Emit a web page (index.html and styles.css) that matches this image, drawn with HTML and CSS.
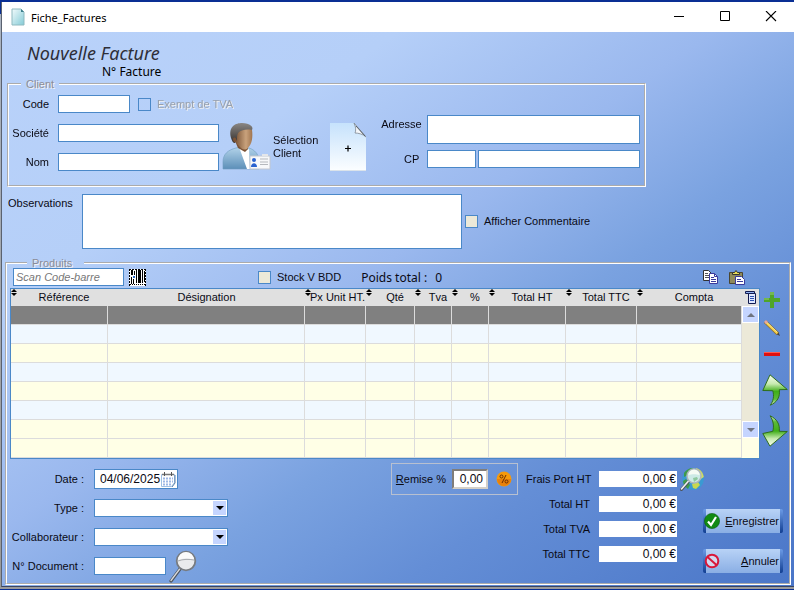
FILE: index.html
```
<!DOCTYPE html>
<html lang="fr">
<head>
  <meta charset="UTF-8">
  <meta name="viewport" content="width=device-width, initial-scale=1.0">
  <title>Fiche_Factures</title>
  <link rel="stylesheet" href="styles.css">
</head>
<body>
  <div class="window">
    <header class="titlebar">
      <svg class="app-icon" width="14" height="18" viewBox="0 0 14 18">
        <defs>
          <linearGradient id="page" x1="0" y1="0" x2="1" y2="1">
            <stop offset="0" stop-color="#f2fbfc"/>
            <stop offset="1" stop-color="#84cbd6"/>
          </linearGradient>
        </defs>
        <path d="M1 1h9l3 3v13H1z" fill="url(#page)" stroke="#8fbac0" stroke-width="1"/>
        <path d="M10 1v3h3z" fill="#3f7f8c"/>
      </svg>
      <span class="window-title">Fiche_Factures</span>
      <button type="button" class="win-btn" aria-label="Réduire">
        <svg width="12" height="12" viewBox="0 0 12 12"><path d="M1 5.500h10" stroke="#000"/></svg>
      </button>
      <button type="button" class="win-btn" aria-label="Agrandir">
        <svg width="12" height="12" viewBox="0 0 12 12"><path d="M1.500 .5h9v9h-9z" fill="none" stroke="#000"/></svg>
      </button>
      <button type="button" class="win-btn" aria-label="Fermer">
        <svg width="12" height="12" viewBox="0 0 12 12"><path d="M1 0l10 10M11 0L1 10" stroke="#000" stroke-width="1.100"/></svg>
      </button>
    </header>

    <main class="content">
      <div class="heading">
        <h1>Nouvelle Facture</h1>
        <p>N° Facture</p>
      </div>

      <fieldset class="group client">
        <legend>Client</legend>
        <div class="client-body">
          <div class="client-fields">
            <label for="code">Code</label>
            <div class="code-row">
              <input type="text" id="code" class="field code" autofocus>
              <input type="checkbox" id="exempt" class="check clear" disabled>
              <label for="exempt" class="disabled">Exempt de TVA</label>
            </div>
            <label for="societe">Société</label>
            <input type="text" id="societe" class="field">
            <label for="nom">Nom</label>
            <input type="text" id="nom" class="field">
          </div>

          <button type="button" class="icon-btn select-client">
            <svg width="50" height="49" viewBox="0 0 50 49">
              <defs>
                <linearGradient id="suit" x1="0" y1="0" x2="0" y2="1">
                  <stop offset="0" stop-color="#b4d4ea"/>
                  <stop offset="1" stop-color="#5c8fb8"/>
                </linearGradient>
                <linearGradient id="face" x1="0" y1="0" x2="1" y2="0">
                  <stop offset="0" stop-color="#6e492e"/>
                  <stop offset=".65" stop-color="#c9a27c"/>
                  <stop offset="1" stop-color="#a0754f"/>
                </linearGradient>
                <linearGradient id="hair" x1="0" y1="0" x2="0" y2="1">
                  <stop offset="0" stop-color="#8a8784"/>
                  <stop offset="1" stop-color="#35302d"/>
                </linearGradient>
              </defs>
              <path d="M1 47V40c0-8 5-12 13-14l5-1 8 1c6 2 9 6 10 11v10z" fill="url(#suit)" stroke="#6f9cbf" stroke-width=".6"/>
              <path d="M17 25l6 4 4-2 1 20h-3z" fill="#fff"/>
              <path d="M13 19h13v8l-3 3-7-4z" fill="#7b5235"/>
              <path d="M12 8c4-4 14-4 18 0 1 7 0 14-4 18-3 3-7 1-9-2-4-4-5-10-5-16z" fill="url(#face)"/>
              <path d="M9 16C6 4 14 1 20 1c8 0 12 4 10 7-6-1-10 0-13 2-2 2-2 4-2 7l-2 4c-2 0-3-2-4-5z" fill="url(#hair)"/>
              <path d="M11 17c0-2 3-2 3 0v3c-2 1-3-1-3-3z" fill="#7b5235"/>
              <path d="M28 34h20v13H28z" fill="#f7f8fa" stroke="#c2c7d0"/>
              <path d="M40 32h6v2h-6z" fill="#e4e6ea"/>
              <circle cx="32" cy="38" r="2" fill="#2a62cf"/>
              <path d="M29 45c0-5 6-5 6 0z" fill="#2a62cf"/>
              <path d="M38 37h8M38 40h8M38 42.500h8" stroke="#b5b8bd"/>
            </svg>
            <span>Sélection<br>Client</span>
          </button>

          <button type="button" class="icon-btn new-client" aria-label="Nouveau client">
            <svg width="36" height="48" viewBox="0 0 36 48">
              <defs>
                <linearGradient id="sheet" x1="0" y1="0" x2="0" y2="1">
                  <stop offset="0" stop-color="#c6e2fc"/>
                  <stop offset="1" stop-color="#fcfeff"/>
                </linearGradient>
              </defs>
              <path d="M0 0h24l12 14v34H0z" fill="url(#sheet)"/>
              <path d="M24 0c2 4 2 8 1 10 3 0 8 1 11 4z" fill="#f3f6f9" stroke="#7d8790" stroke-width=".8"/>
              <path d="M26 3l9 10" stroke="#555f68" stroke-width="1"/>
              <path d="M0 47.500h36" stroke="#dbe3ea"/>
              <path d="M15 25.500h6M18 22.500v6" stroke="#000" stroke-width="1.200"/>
            </svg>
          </button>

          <div class="address">
            <label for="adresse">Adresse</label>
            <textarea id="adresse" class="field"></textarea>
            <label for="cp" class="cp-label">CP</label>
            <div class="city">
              <input type="text" id="cp" class="field">
              <input type="text" class="field" aria-label="Ville">
            </div>
          </div>
        </div>
      </fieldset>

      <div class="notes">
        <label for="observations">Observations</label>
        <textarea id="observations" class="field"></textarea>
        <span class="option">
          <input type="checkbox" id="commentaire" class="check">
          <label for="commentaire">Afficher Commentaire</label>
        </span>
      </div>

      <fieldset class="group products">
        <legend>Produits</legend>

        <div class="toolbar">
          <input type="text" class="field scan" placeholder="Scan Code-barre" aria-label="Scan Code-barre">
          <svg class="barcode" width="17" height="17" viewBox="0 0 17 17">
            <path fill="#fff" d="M0 0h17v17H0z"/>
            <path stroke="#000" stroke-dasharray="2 1" d="M.5 0v17M16.500 0v17M0 .5h17"/>
            <path fill="#000" d="M2 1h2v5H2zM2 8h1v7H2zM4 10h1v5H4zM5 2h1v4H5zM7 1h1v13H7zM9 1h3v13H9zM13 1h1v13h-1zM15 2h1v11h-1z"/>
            <path fill="#2a6ac8" d="M4 7h2v2H4z"/>
            <path stroke="#000" stroke-dasharray="1 1" d="M1 15.500h15"/>
          </svg>
          <span class="option stock">
            <input type="checkbox" id="stock" class="check">
            <label for="stock">Stock V BDD</label>
          </span>
          <span class="weight">Poids total : <b>0</b></span>
          <button type="button" class="icon-btn copy" aria-label="Copier">
            <svg width="16" height="15" viewBox="0 0 16 15">
              <path d="M.5.5h5l3 3v7h-8z" fill="#fff" stroke="#333"/>
              <path d="M2 3.500h3M2 5.500h4M2 7.500h4" stroke="#555"/>
              <path d="M6.500 3.500h5l3 3v7h-8z" fill="#fff" stroke="#3a3a9c"/>
              <path d="M11.500 3.500v3h3M8 7.500h3M8 9.500h5M8 11.500h5" fill="none" stroke="#3a3a9c"/>
            </svg>
          </button>
          <button type="button" class="icon-btn" aria-label="Coller">
            <svg width="16" height="15" viewBox="0 0 16 15">
              <path d="M.5 2.500h13v11H.5z" fill="#8f8a5c" stroke="#4a4630"/>
              <path d="M3.500 4.500v-2h2L7 .5l1.500 2h2v2z" fill="#e9dc58" stroke="#333"/>
              <path d="M6.500 6.500h6l3 3v5h-9z" fill="#fff" stroke="#3a3a9c"/>
              <path d="M8 9.500h4M8 11.500h6" stroke="#3a3a9c"/>
            </svg>
          </button>
        </div>

        <div class="lines">
          <div class="grid">
            <table>
              <colgroup>
                <col class="w-ref"><col><col class="w-price"><col class="w-qty"><col class="w-small"><col class="w-small"><col class="w-ht"><col class="w-ttc"><col class="w-compta">
              </colgroup>
              <thead>
                <tr>
                  <th class="sort">Référence</th>
                  <th>Désignation</th>
                  <th class="sort tight">Px Unit HT.</th>
                  <th class="sort">Qté</th>
                  <th class="sort">Tva</th>
                  <th class="sort">%</th>
                  <th class="sort">Total HT</th>
                  <th class="sort">Total TTC</th>
                  <th class="sort">Compta</th>
                </tr>
              </thead>
              <tbody>
                <tr class="selected"><td></td><td></td><td></td><td></td><td></td><td></td><td></td><td></td><td></td></tr>
                <tr><td></td><td></td><td></td><td></td><td></td><td></td><td></td><td></td><td></td></tr>
                <tr><td></td><td></td><td></td><td></td><td></td><td></td><td></td><td></td><td></td></tr>
                <tr><td></td><td></td><td></td><td></td><td></td><td></td><td></td><td></td><td></td></tr>
                <tr><td></td><td></td><td></td><td></td><td></td><td></td><td></td><td></td><td></td></tr>
                <tr><td></td><td></td><td></td><td></td><td></td><td></td><td></td><td></td><td></td></tr>
                <tr><td></td><td></td><td></td><td></td><td></td><td></td><td></td><td></td><td></td></tr>
                <tr class="blank"><td></td><td></td><td></td><td></td><td></td><td></td><td></td><td></td><td></td></tr>
              </tbody>
            </table>
            <div class="scroll">
              <button type="button" class="icon-btn columns" aria-label="Colonnes">
                <svg width="12" height="13" viewBox="0 0 12 13">
                  <path d="M.5.5h9v2h-9z" fill="#8fb0f0" stroke="#111a50"/>
                  <path d="M3.500 2.500h7v10h-7z" fill="#dfe8ff" stroke="#111a50"/>
                  <path d="M5 5.500h4M5 7.500h4M5 9.500h4" stroke="#2b4fb0"/>
                </svg>
              </button>
              <button type="button" class="scroll-btn" aria-label="Monter">
                <svg width="8" height="4" viewBox="0 0 8 4"><path d="M4 0l4 4H0z" fill="#6f7480"/></svg>
              </button>
              <div class="track"></div>
              <button type="button" class="scroll-btn" aria-label="Descendre">
                <svg width="8" height="4" viewBox="0 0 8 4"><path d="M4 4l4-4H0z" fill="#6f7480"/></svg>
              </button>
            </div>
          </div>

          <div class="side">
            <button type="button" class="icon-btn add" aria-label="Ajouter">
              <svg width="16" height="16" viewBox="0 0 16 16"><path d="M6 0h4v6h6v4h-6v6H6v-6H0V6h6z" fill="#4fa528"/><path d="M6 0h4v3H6zM0 6h5v2H0z" fill="#74b850"/></svg>
            </button>
            <button type="button" class="icon-btn edit" aria-label="Modifier">
              <svg width="16" height="16" viewBox="0 0 16 16">
                <path d="M1 1.500l13 12.500" stroke="#8c6a2a" stroke-width="3.400"/>
                <path d="M1.500 2L13.500 13.500" stroke="#f4cf4a" stroke-width="2.200"/>
                <path d="M3 2.500L13 12" stroke="#fff0a0" stroke-width=".8"/>
                <path d="M0 2L2 0l2 2-2 2z" fill="#e8a7a0"/>
                <path d="M13 14.500l1.500-2L16 16z" fill="#444"/>
              </svg>
            </button>
            <button type="button" class="icon-btn remove" aria-label="Supprimer">
              <svg width="16" height="4" viewBox="0 0 16 4"><path d="M0 0h16v4H0z" fill="#e01010"/><path d="M0 0h16v1H0z" fill="#ff5a50"/></svg>
            </button>
            <button type="button" class="icon-btn up" aria-label="Monter la ligne">
              <svg width="26" height="32" viewBox="0 0 26 32">
                <defs>
                  <linearGradient id="green" x1="0" y1="0" x2="0" y2="1">
                    <stop offset="0" stop-color="#f6fdf0"/>
                    <stop offset=".3" stop-color="#c8eab0"/>
                    <stop offset=".55" stop-color="#3fae18"/>
                    <stop offset=".8" stop-color="#5dbb38"/>
                    <stop offset="1" stop-color="#e4f6d8"/>
                  </linearGradient>
                </defs>
                <path d="M8 .8L25.300 15.500l-8 .2c1 7-2 12.500-9 15.500 3-4 4-9 2.500-14.500L.8 16.500z" fill="url(#green)" stroke="#2f6d1c"/>
              </svg>
            </button>
            <button type="button" class="icon-btn down" aria-label="Descendre la ligne">
              <svg width="26" height="32" viewBox="0 0 26 32">
                <defs>
                  <linearGradient id="green-down" x1="0" y1="0" x2="0" y2="1">
                    <stop offset="0" stop-color="#e4f6d8"/>
                    <stop offset=".2" stop-color="#5dbb38"/>
                    <stop offset=".5" stop-color="#3fae18"/>
                    <stop offset=".75" stop-color="#c8eab0"/>
                    <stop offset="1" stop-color="#f6fdf0"/>
                  </linearGradient>
                </defs>
                <path d="M8 .8c7 3 10 8.500 9.300 15.500l8 .2L8 31.200.8 18.500l10-2.200C12.300 10.800 11 4.800 8 .8z" fill="url(#green-down)" stroke="#2f6d1c"/>
              </svg>
            </button>
          </div>
        </div>

        <div class="bottom">
          <div class="infos">
            <label for="date">Date :</label>
            <div class="date">
              <input type="text" id="date" value="04/06/2025">
              <button type="button" class="icon-btn" aria-label="Calendrier">
                <svg width="15" height="15" viewBox="0 0 15 15">
                  <path d="M.5 2.500h13v8l-3 4H.5z" fill="#fff" stroke="#9fc0e4"/>
                  <path d="M1 2.500h12" stroke="#777" stroke-width="1.500"/>
                  <path d="M3.500 0v4M10.500 0v4" stroke="#555"/>
                  <path d="M2 6.500h10M2 9.500h10M2 12.500h8" stroke="#9db8e6" stroke-width="2" stroke-dasharray="2 1"/>
                  <path d="M14 3v8l-3 4" fill="none" stroke="#5a7fa8"/>
                </svg>
              </button>
            </div>
            <label for="type">Type :</label>
            <span class="combo"><select id="type"><option></option></select></span>
            <label for="collaborateur">Collaborateur :</label>
            <span class="combo"><select id="collaborateur"><option></option></select></span>
            <label for="document">N° Document :</label>
            <div class="doc">
              <input type="text" id="document" class="field">
              <button type="button" class="icon-btn" aria-label="Rechercher">
                <svg width="28" height="33" viewBox="0 0 28 33">
                  <path d="M2 31l9-12" stroke="#4d545c" stroke-width="3.200" stroke-linecap="round"/>
                  <path d="M2 30.500l9-12" stroke="#d8dadd" stroke-width="1.300" stroke-linecap="round"/>
                  <circle cx="17" cy="11" r="9.300" fill="#e9eaec" stroke="#777b80" stroke-width="1.800"/>
                  <path d="M9 10a8 8 0 0 1 16 0c-5-2-11-2-16 0z" fill="#fbfbfb"/>
                  <path d="M9 11c5-2 11-2 16-1" fill="none" stroke="#a8abaf"/>
                </svg>
              </button>
            </div>
          </div>

          <div class="discount">
            <label for="remise"><u>R</u>emise %</label>
            <input type="text" id="remise" value="0,00">
            <button type="button" class="icon-btn" aria-label="Appliquer la remise">
              <svg width="16" height="16" viewBox="0 0 16 16">
                <circle cx="8" cy="8" r="7.500" fill="#f59a0c"/>
                <path d="M1 8a7 7 0 0 0 14 0z" fill="#e8800a"/>
                <circle cx="5.500" cy="5.500" r="1.500" fill="none" stroke="#6b2d00"/>
                <circle cx="10.500" cy="10.500" r="1.500" fill="none" stroke="#6b2d00"/>
                <path d="M10 4l-4 8" stroke="#6b2d00"/>
              </svg>
            </button>
          </div>

          <div class="totals">
            <label for="port">Frais Port HT</label>
            <input type="text" id="port" value="0,00 €">
            <button type="button" class="icon-btn globe" aria-label="Frais de port">
              <svg width="25" height="24" viewBox="0 0 25 24">
                <circle cx="13" cy="12" r="10.800" fill="#3a9ad2"/>
                <path d="M4 6c2-3 5-5 9-5l-3 3-2 4-4 2zM3 14l3-2 4 6-2 4c-3-2-5-5-5-8z" fill="#3f9a4a"/>
                <path d="M16 1c4 1 7 4 7.800 9l-3 2-3-4z" fill="#cfdc62"/>
                <path d="M12 17l6-2 2 3-4 4-3-1z" fill="#c8d84e"/>
                <path d="M1.500 22.500l7-8" stroke="#4d545c" stroke-width="3" stroke-linecap="round"/>
                <path d="M1.500 22l7-8" stroke="#f0f1f2" stroke-width="1.600" stroke-linecap="round"/>
                <circle cx="14" cy="9" r="7" fill="#cdeae6" stroke="#aeb6ba" stroke-width="1.500"/>
                <path d="M8.500 8a5.500 5.500 0 0 1 11 0c-3-1-8-1-11 0z" fill="#f6fbf4"/>
                <path d="M13 11l4-1 1 2-4 3z" fill="#8fc9a0"/>
              </svg>
            </button>
            <label for="ht">Total HT</label>
            <input type="text" id="ht" value="0,00 €">
            <label for="tva">Total TVA</label>
            <input type="text" id="tva" value="0,00 €">
            <label for="ttc">Total TTC</label>
            <input type="text" id="ttc" value="0,00 €">
          </div>

          <div class="actions">
            <button type="button" class="action">
              <svg width="16" height="16" viewBox="0 0 16 16">
                <circle cx="8" cy="8" r="7.600" fill="#128a14" stroke="#0b5c10" stroke-width=".6"/>
                <path d="M4 8.500l3 3.500 5-8" fill="none" stroke="#fff" stroke-width="2.200"/>
              </svg>
              <span><u>E</u>nregistrer</span>
            </button>
            <button type="button" class="action">
              <svg width="16" height="16" viewBox="0 0 16 16">
                <circle cx="8" cy="8" r="6.300" fill="#d4d8ee" stroke="#d8173a" stroke-width="2"/>
                <path d="M3.500 4l9 8" stroke="#d8173a" stroke-width="2"/>
              </svg>
              <span><u>A</u>nnuler</span>
            </button>
          </div>
        </div>
      </fieldset>
    </main>
  </div>
</body>
</html>
```
FILE: styles.css
```
* {
  box-sizing: border-box;
}

body {
  margin: 0;
  padding: 2px 0 2px 1px;
  background: linear-gradient(#0a2f94 0, #0a2f94 14px, #aab4c2 14px, #9a9a9a 100%);
  font-family: "Liberation Sans", Arial, sans-serif;
  font-size: 11px;
  line-height: 13px;
  color: #0a0a14;
}

.window {
  border-left: 1px solid #5a6270;
  border-bottom: 1px solid #3a4560;
}

/* title bar */
.titlebar {
  display: flex;
  align-items: center;
  height: 30px;
  padding-left: 9px;
  background: #fff;
}

.window-title {
  flex: 1;
  margin-left: 6px;
  font-family: "Noto Sans", sans-serif;
  font-size: 11px;
  color: #000;
}

.win-btn {
  display: flex;
  align-items: center;
  justify-content: center;
  width: 46px;
  height: 30px;
  padding: 0;
  border: none;
  background: none;
}

/* common parts */
.content {
  padding: 10px 3px 1px;
  background: linear-gradient(to bottom right, #b9d2fa 0, #b5cff8 25%, #9ab8ee 45%, #7aa2e0 60%, #648ed6 75%, #4a76c8 100%);
}

button,
input,
select,
textarea {
  font: inherit;
  color: inherit;
}

label {
  white-space: nowrap;
}

.field {
  display: block;
  width: 100%;
  height: 18px;
  padding: 0 2px;
  border: 1px solid #4a88c8;
  border-radius: 0;
  background: #fff;
  resize: none;
}

.field:focus {
  outline: none;
}

.icon-btn {
  display: flex;
  flex-shrink: 0;
  padding: 0;
  border: none;
  background: none;
}

.check {
  appearance: none;
  flex-shrink: 0;
  width: 13px;
  height: 13px;
  margin: 0;
  border: 1px solid #4a88c8;
  background: #ece9d8;
}

.check.clear {
  background: none;
}

.option {
  display: flex;
  align-items: center;
  gap: 6px;
}

.group {
  min-width: 0;
  margin: 0;
  padding: 0;
  border: 2px groove #fff;
}

.group legend {
  margin-left: 12px;
  padding: 0 5px;
  line-height: 10px;
  color: #8c8c96;
  text-shadow: 1px 1px 0 #f4f4f4;
}

.heading h1 {
  margin: 0 0 0 22px;
  font: italic 18px/22px "Noto Sans", sans-serif;
  color: #2e2e38;
}

.heading p {
  margin: 0 0 0 97px;
  font: 12px/15px "Noto Sans", sans-serif;
  color: #000;
}

/* client */
.client {
  margin: 0 145px 0 2px;
}

.client-body {
  display: flex;
  padding: 6px 4px 14px 2px;
}

.client-fields {
  display: grid;
  grid-template-columns: 38px 161px;
  grid-auto-rows: 18px;
  align-items: center;
  gap: 11px 9px;
}

.client-fields > label {
  text-align: right;
}

.code-row {
  display: flex;
  align-items: center;
}

.code {
  flex-shrink: 0;
  width: 72px;
  margin-right: 8px;
}

.disabled {
  margin-left: 6px;
  color: #98a0ac;
  text-shadow: 1px 1px 0 #f0f0f0;
}

.select-client {
  align-items: center;
  align-self: flex-end;
  gap: 1px;
  margin-left: 3px;
  text-align: left;
}

.new-client {
  align-self: flex-end;
  margin-left: 12px;
}

.address {
  display: grid;
  flex: 1;
  grid-template-columns: 38px 1fr;
  align-content: start;
  gap: 6px 8px;
  margin-left: 15px;
  padding-top: 20px;
}

.address label {
  padding-top: 3px;
  text-align: right;
}

.address textarea {
  height: 29px;
}

.city {
  display: grid;
  grid-template-columns: 49px 1fr;
  gap: 2px;
}

/* observations */
.notes {
  display: flex;
  margin: 7px 0 9px 3px;
}

.notes > label {
  width: 74px;
  padding-top: 3px;
}

.notes textarea {
  width: 380px;
  height: 55px;
  margin-right: 3px;
}

/* products */
.products legend {
  margin-left: 20px;
  padding-right: 12px;
}

.toolbar {
  display: flex;
  align-items: center;
  padding: 0 44px 0 6px;
}

.scan {
  width: 111px;
  margin-right: 5px;
}

.scan::placeholder {
  color: #777;
  font-style: italic;
  opacity: 1;
}

.stock {
  margin-left: 112px;
}

.weight {
  margin-left: 20px;
  font-family: "Noto Sans", sans-serif;
  font-size: 12px;
}

.weight b {
  margin-left: 5px;
  font-weight: normal;
}

.copy {
  margin-right: 10px;
  margin-left: auto;
}

.lines {
  display: flex;
  gap: 2px;
  margin-top: 2px;
  padding-left: 3px;
}

.grid {
  display: grid;
  flex: 1;
  grid-template-columns: 1fr 17px;
  border: 1px solid #4a88c8;
  background: #ffffe6;
}

table {
  width: 100%;
  border-spacing: 0;
  table-layout: fixed;
}

.w-ref { width: 97px; }
.w-price { width: 61px; }
.w-qty { width: 49px; }
.w-small { width: 37px; }
.w-ht { width: 77px; }
.w-ttc { width: 71px; }
.w-compta { width: 105px; }

th {
  position: relative;
  height: 17px;
  padding: 0;
  background: #e0e0e0;
  font-weight: normal;
  white-space: nowrap;
}

.sort {
  padding-left: 9px;
}

.sort.tight {
  padding-left: 4px;
}

.sort::before,
.sort::after {
  content: "";
  position: absolute;
  top: 0;
  left: 0;
  border: 3px solid transparent;
  border-top-width: 0;
  border-bottom-color: #000;
}

.sort::after {
  top: 4px;
  border-top: 3px solid #000;
  border-bottom-width: 0;
}

td {
  height: 19px;
  padding: 0;
  border-right: 1px solid #dcdcdc;
  border-bottom: 1px solid #dcdcdc;
  background: #ffffe6;
}

tr:nth-child(even) td {
  background: #f0f8ff;
}

tr.selected td {
  background: #808080;
}

tr.blank td {
  background: #ffffe6;
}

.scroll {
  display: flex;
  flex-direction: column;
  padding-bottom: 20px;
}

.columns {
  justify-content: center;
  height: 17px;
  padding-top: 2px;
  background: #e0e0e0;
}

.scroll-btn {
  display: flex;
  align-items: center;
  justify-content: center;
  height: 17px;
  padding: 0;
  border: 1px solid #fff;
  background: #c5d5ff;
}

.track {
  flex: 1;
  background: #ece9d8;
}

.side {
  display: flex;
  flex-direction: column;
  width: 27px;
  padding-top: 4px;
}

.add,
.edit,
.remove {
  margin-left: 2px;
}

.edit {
  margin-top: 12px;
}

.remove {
  margin-top: 16px;
}

.up {
  margin-top: 18px;
}

.down {
  margin-top: 9px;
}

/* bottom part */
.bottom {
  display: flex;
  align-items: flex-start;
  padding: 4px 6px 7px 3px;
}

.infos {
  display: grid;
  grid-template-columns: 74px 134px;
  grid-auto-rows: 20px;
  align-items: center;
  gap: 9px 10px;
  margin: 6px auto 0 0;
}

.infos > label,
.totals label {
  text-align: right;
}

.date {
  display: flex;
  align-items: center;
  width: 84px;
  height: 20px;
  padding: 0 1px 0 5px;
  border: 1px solid #4a88c8;
  background: #fff;
}

.date input {
  flex: 1;
  width: 0;
  padding: 0;
  border: none;
  background: none;
  font-size: 12px;
}

.combo {
  position: relative;
  height: 18px;
}

.combo select {
  appearance: none;
  width: 100%;
  height: 18px;
  border: 1px solid #4a88c8;
  border-radius: 0;
  background: linear-gradient(#c5d5ff, #c5d5ff) right 1px center / 13px 14px no-repeat #fff;
}

.combo::after {
  content: "";
  position: absolute;
  top: 7px;
  right: 4px;
  border: 4px solid transparent;
  border-top-color: #000;
  border-bottom: none;
  pointer-events: none;
}

.doc {
  display: flex;
  align-items: center;
  gap: 3px;
  height: 20px;
}

.doc .field {
  width: 72px;
}

.discount {
  display: flex;
  align-items: center;
  height: 32px;
  padding: 0 5px 0 4px;
  border: 1px solid #b8c0d0;
}

.discount input {
  width: 36px;
  height: 20px;
  margin: 0 8px 0 6px;
  padding: 0 3px;
  border: 2px inset #d4d0c8;
  background: #fff;
  font-size: 12px;
  text-align: right;
}

.totals {
  position: relative;
  display: grid;
  grid-template-columns: 64px 78px;
  grid-auto-rows: 16px;
  align-items: center;
  gap: 9px;
  margin: 8px 0 0 8px;
}

.totals input {
  width: 100%;
  height: 16px;
  padding: 0 1px;
  border: none;
  background: #fff;
  font-size: 12px;
  text-align: right;
}

/* search icon sits beside the first amount */
.globe {
  position: absolute;
  top: -4px;
  left: 154px;
}

.actions {
  display: grid;
  gap: 16px;
  margin: 46px 0 0 26px;
}

.action {
  display: flex;
  align-items: center;
  justify-content: space-between;
  width: 80px;
  height: 24px;
  padding: 0 1px;
  border: none;
  border-radius: 2px;
  background:
    linear-gradient(#6c9be6, #123f92) left / 3px 100% no-repeat,
    linear-gradient(#6c9be6, #123f92) right / 3px 100% no-repeat,
    linear-gradient(#b8d2f6, #8aaee4);
}

.action span {
  margin-right: 3px;
}
```
